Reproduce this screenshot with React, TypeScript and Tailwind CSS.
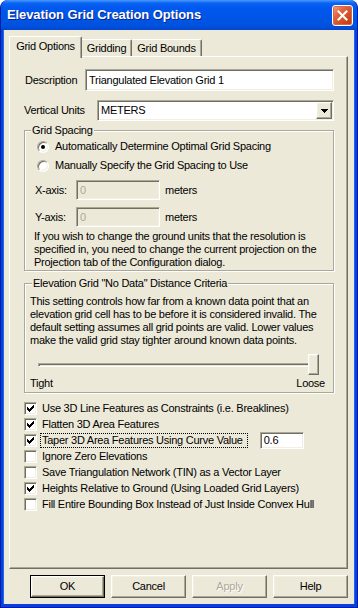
import React from "react";

const sunken =
  "border border-t-[#aca899] border-l-[#aca899] border-r-white border-b-white shadow-[inset_1px_1px_0_#716f64,inset_-1px_-1px_0_#f1efe2]";
const raised =
  "border border-t-white border-l-white border-r-[#716f64] border-b-[#716f64] shadow-[inset_-1px_-1px_0_#aca899,inset_1px_1px_0_#f1efe2]";

const CHECK = [
  "......X",
  ".....XX",
  "X...XXX",
  "XX.XXX.",
  "XXXXX..",
  ".XXX...",
  "..X....",
];

function CheckMark() {
  const rects: React.ReactNode[] = [];
  CHECK.forEach((row, y) =>
    row.split("").forEach((c, x) => {
      if (c === "X") rects.push(<rect key={`${x}-${y}`} x={x} y={y} width={1} height={1} fill="#000" />);
    })
  );
  return (
    <svg width="7" height="7" viewBox="0 0 7 7" shapeRendering="crispEdges">
      {rects}
    </svg>
  );
}

function Checkbox({ checked }: { checked?: boolean }) {
  return (
    <span className={`w-[13px] h-[13px] shrink-0 bg-white flex items-center justify-center ${sunken}`}>
      {checked && <CheckMark />}
    </span>
  );
}

function Radio({ checked }: { checked?: boolean }) {
  return (
    <span className="w-[12px] h-[12px] shrink-0 rounded-full bg-white border border-t-[#aca899] border-l-[#aca899] border-r-white border-b-white shadow-[inset_1px_1px_0_#716f64,inset_-1px_-1px_0_#f1efe2] flex items-center justify-center">
      {checked && <span className="w-[4px] h-[4px] rounded-full bg-black" />}
    </span>
  );
}

function CheckRow({ checked, children }: { checked?: boolean; children: React.ReactNode }) {
  return (
    <div className="h-[16px] flex items-center">
      <Checkbox checked={checked} />
      <span className="ml-[5px] whitespace-nowrap">{children}</span>
    </div>
  );
}

function Button({ label, isDefault, disabled }: { label: string; isDefault?: boolean; disabled?: boolean }) {
  const inner = (
    <div
      className={`w-full h-full flex items-center justify-center ${raised} ${
        disabled ? "text-[#aca899] [text-shadow:1px_1px_0_#fff]" : "text-black"
      }`}
    >
      {label}
    </div>
  );
  return (
    <div className={`w-[75px] h-[23px] ${isDefault ? "border border-black" : ""}`}>{inner}</div>
  );
}

export default function App() {
  return (
    <div className="w-[358px] h-[608px] bg-white font-['Liberation_Sans',Arial,sans-serif] text-[11px] tracking-[-0.25px] text-black leading-[13px]">
      <div className="w-full h-full flex flex-col rounded-t-[8px] overflow-hidden bg-[#0a3ee0] border-x border-b border-[#001c9c]">
        {/* Title bar */}
        <div className="h-[30px] shrink-0 flex items-center pl-[6px] pr-[4px] bg-[linear-gradient(to_bottom,#4a9bff_0%,#0b63f4_10%,#0058ee_25%,#0055e6_60%,#0052df_85%,#0345cd_100%)]">
          <span className="flex-1 text-white font-bold text-[13px] tracking-[-0.1px] leading-[16px] [text-shadow:1px_1px_0_#0c2488]">
            Elevation Grid Creation Options
          </span>
          <div className="w-[21px] h-[21px] rounded-[3px] border border-white bg-[linear-gradient(135deg,#f0a58c_0%,#e0643e_35%,#cf4a1e_70%,#b93a12_100%)] flex items-center justify-center shadow-[inset_0_0_0_1px_#d8694a]">
            <svg width="11" height="11" viewBox="0 0 11 11">
              <path d="M1.5 1.5 L9.5 9.5 M9.5 1.5 L1.5 9.5" stroke="#fff" strokeWidth="2" strokeLinecap="square" />
            </svg>
          </div>
        </div>

        {/* Client area */}
        <div className="flex-1 mx-[3px] mb-[3px] bg-[#ece9d8] flex flex-col shadow-[-1px_0_0_#166aee,1px_0_0_#166aee]">
          {/* Tabs */}
          <div className="h-[26px] pl-[5px] flex items-end">
            <div className="relative z-10 mb-[-2px] h-[22px] w-[73px] bg-[#ece9d8] border-t border-l border-white border-r border-r-[#716f64] rounded-tr-[2px] shadow-[inset_-1px_0_0_#aca899] flex items-start justify-center pt-[3px]">
              Grid Options
            </div>
            <div className="h-[17px] w-[50px] border-t border-white border-r border-r-[#716f64] shadow-[inset_-1px_0_0_#aca899] rounded-tr-[2px] flex items-center justify-center pt-[1px]">
              Gridding
            </div>
            <div className="h-[17px] w-[70px] border-t border-white border-r border-r-[#716f64] shadow-[inset_-1px_0_0_#aca899] rounded-tr-[2px] flex items-center justify-center pt-[1px]">
              Grid Bounds
            </div>
          </div>

          {/* Pane */}
          <div className="ml-[5px] mr-[6px] h-[513px] border-t border-l border-white border-r border-b border-r-[#716f64] border-b-[#716f64] shadow-[inset_-1px_-1px_0_#aca899] flex flex-col pl-[14px] pr-[13px]">
            <div className="mt-[12px] h-[22px] flex items-center">
              <span className="w-[61px] pl-[1px] shrink-0">Description</span>
              <div className={`w-[249px] h-[22px] bg-white flex items-center pl-[3px] ${sunken}`}>
                Triangulated Elevation Grid 1
              </div>
            </div>
            <div className="mt-[9px] h-[21px] flex items-center">
              <span className="w-[73px] shrink-0">Vertical Units</span>
              <div className={`w-[237px] h-[21px] bg-white flex items-center pl-[3px] pr-[1px] ${sunken}`}>
                <span className="flex-1">METERS</span>
                <div className={`w-[16px] h-[17px] bg-[#ece9d8] flex items-center justify-center ${raised}`}>
                  <svg width="7" height="4" viewBox="0 0 7 4" shapeRendering="crispEdges">
                    <path d="M0 0 H7 V1 H6 V2 H5 V3 H4 V4 H3 V3 H2 V2 H1 V1 H0 Z" fill="#000" />
                  </svg>
                </div>
              </div>
            </div>

            {/* Grid Spacing */}
            <fieldset className="mt-[3px] w-[310px] border border-[#aca899] shadow-[inset_1px_1px_0_#fff,1px_1px_0_#fff] pb-[1px]">
              <legend className="ml-[6px] px-[1px] bg-[#ece9d8] leading-[13px]">Grid Spacing</legend>
              <div className="flex flex-col pl-[10px]">
                <div className="h-[19px] flex items-center ml-[2px]">
                  <Radio checked />
                  <span className="ml-[6px]">Automatically Determine Optimal Grid Spacing</span>
                </div>
                <div className="h-[19px] flex items-center ml-[2px]">
                  <Radio />
                  <span className="ml-[6px]">Manually Specify the Grid Spacing to Use</span>
                </div>
                <div className="mt-[5px] h-[20px] flex items-center">
                  <span className="w-[41px] shrink-0">X-axis:</span>
                  <div className={`w-[84px] h-[20px] bg-[#ece9d8] text-[#aca899] flex items-center pl-[3px] ${sunken}`}>0</div>
                  <span className="ml-[5px]">meters</span>
                </div>
                <div className="mt-[7px] h-[20px] flex items-center">
                  <span className="w-[41px] shrink-0">Y-axis:</span>
                  <div className={`w-[84px] h-[20px] bg-[#ece9d8] text-[#aca899] flex items-center pl-[3px] ${sunken}`}>0</div>
                  <span className="ml-[5px]">meters</span>
                </div>
                <p className="mt-[3px] ml-[-1px] leading-[13px] whitespace-nowrap">
                  If you wish to change the ground units that the resolution is
                  <br />
                  specified in, you need to change the current projection on the
                  <br />
                  Projection tab of the Configuration dialog.
                </p>
              </div>
            </fieldset>

            {/* No Data */}
            <fieldset className="mt-[6px] w-[310px] border border-[#aca899] shadow-[inset_1px_1px_0_#fff,1px_1px_0_#fff] pb-[2px]">
              <legend className="ml-[7px] px-[1px] bg-[#ece9d8] leading-[13px]">
                Elevation Grid "No Data" Distance Criteria
              </legend>
              <div className="flex flex-col pl-[5px]">
                <p className="mt-[5px] leading-[13px] whitespace-nowrap">
                  This setting controls how far from a known data point that an
                  <br />
                  elevation grid cell has to be before it is considered invalid. The
                  <br />
                  default setting assumes all grid points are valid. Lower values
                  <br />
                  make the valid grid stay tighter around known data points.
                </p>
                <div className="mt-[7px] ml-[8px] w-[281px] h-[21px] flex items-center">
                  <div className="flex-1 h-[4px] border border-t-[#aca899] border-l-[#aca899] border-r-white border-b-white shadow-[inset_1px_1px_0_#716f64]" />
                  <div className={`w-[11px] h-[21px] shrink-0 ml-[-10px] bg-[#ece9d8] ${raised}`} />
                </div>
                <div className="mt-[2px] w-[295px] h-[13px] flex justify-between">
                  <span>Tight</span>
                  <span>Loose</span>
                </div>
              </div>
            </fieldset>

            {/* Checkboxes */}
            <div className="mt-[7px] flex flex-col">
              <CheckRow checked>Use 3D Line Features as Constraints (i.e. Breaklines)</CheckRow>
              <CheckRow checked>Flatten 3D Area Features</CheckRow>
              <div className="h-[16px] flex items-center">
                <Checkbox checked />
                <span className="ml-[4px] pl-[1px] pr-[4px] whitespace-nowrap outline outline-1 outline-dotted outline-black outline-offset-0 leading-[13px]">
                  Taper 3D Area Features Using Curve Value
                </span>
                <div className={`ml-[13px] w-[44px] h-[17px] bg-white flex items-center pl-[3px] ${sunken}`}>0.6</div>
              </div>
              <CheckRow>Ignore Zero Elevations</CheckRow>
              <CheckRow>Save Triangulation Network (TIN) as a Vector Layer</CheckRow>
              <CheckRow checked>Heights Relative to Ground (Using Loaded Grid Layers)</CheckRow>
              <CheckRow>Fill Entire Bounding Box Instead of Just Inside Convex Hull</CheckRow>
            </div>
          </div>

          {/* Buttons */}
          <div className="mt-[6px] flex justify-end gap-[6px] pr-[6px]">
            <Button label="OK" isDefault />
            <Button label="Cancel" />
            <Button label="Apply" disabled />
            <Button label="Help" />
          </div>
        </div>
      </div>
    </div>
  );
}
